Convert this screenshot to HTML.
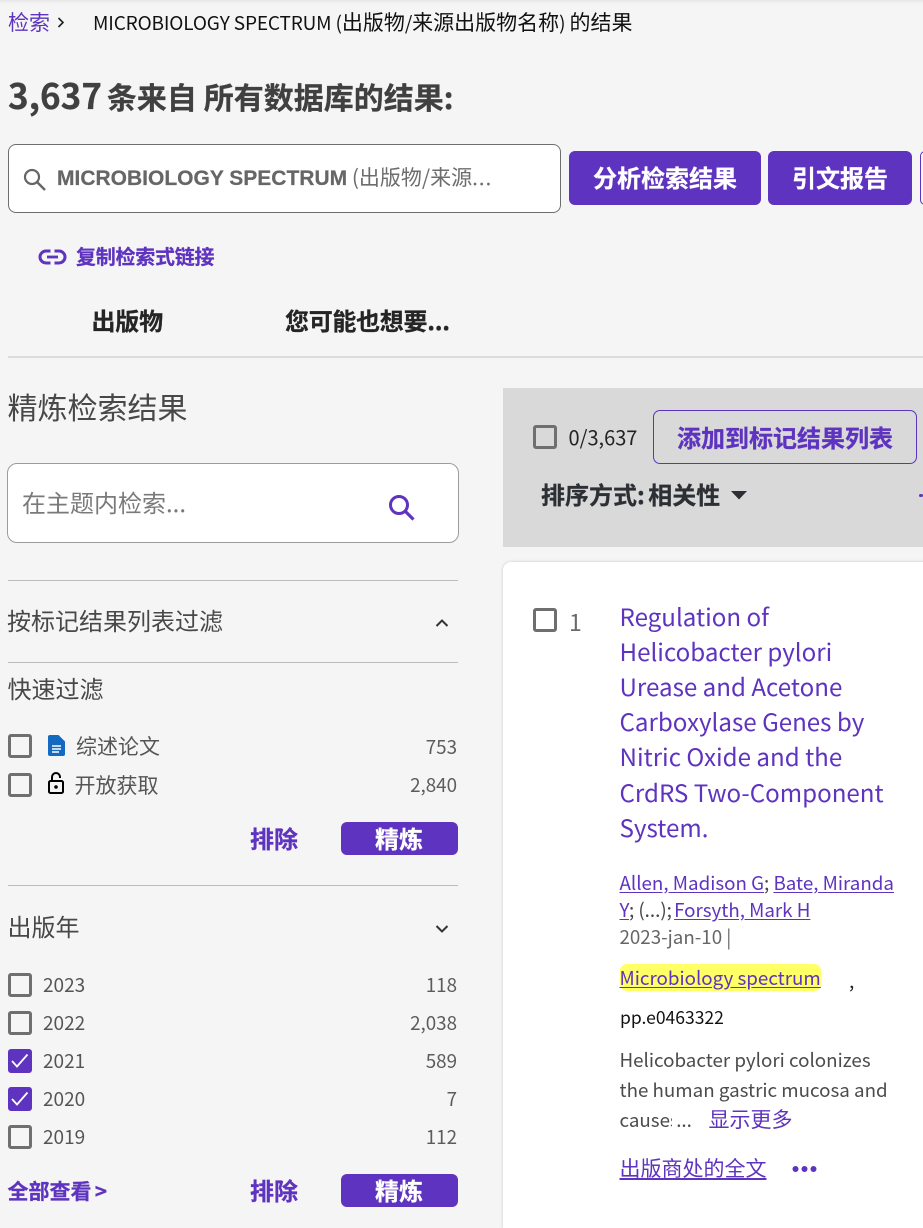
<!DOCTYPE html>
<html lang="zh">
<head>
<meta charset="utf-8">
<title>Results</title>
<style>
html{margin:0;padding:0;width:923px;height:1228px;overflow:hidden}
body{margin:0;padding:0;width:923px;height:1228px;overflow:hidden;position:relative;background:#f5f5f5;font-family:"Noto Sans CJK SC","Liberation Sans",sans-serif;color:#494d4e}
.t{position:absolute;white-space:nowrap;line-height:30px;height:30px}
.p{color:#5e33bf}
.b{font-weight:700;-webkit-text-stroke:.25px currentColor}
.u{text-decoration:underline;text-underline-offset:2px}
.r{position:absolute;right:466px;white-space:nowrap;line-height:30px;height:30px;font-size:18.800px;color:#5c5c5c}
.cb{position:absolute;left:8px;width:18px;height:18px;border:3px solid #6f6f6f;border-radius:3px}
.cb.on{background:#5e33bf;border-color:#5e33bf}
.cb svg{position:absolute;left:-1px;top:-1px}
.ln{position:absolute;height:1px;background:#bcbcbc;left:8px;width:450px}
.btn{position:absolute;background:#5e33bf;color:#fff;font-weight:700;text-align:center;border-radius:6px;-webkit-text-stroke:.25px #fff}
svg{position:absolute;overflow:visible}
</style>
</head>
<body>
<div style="position:absolute;left:0;top:0;width:923px;height:4px;background:linear-gradient(#e6e6e6,#f5f5f5)"></div>

<div class="t p" style="left:8px;top:7px;font-size:21px">检索</div>
<svg style="left:57px;top:17px" width="8" height="11" viewBox="0 0 8 11"><path d="M1.500 1l4.500 4.500L1.500 10" fill="none" stroke="#222" stroke-width="1.600"/></svg>
<div class="t" style="left:93px;top:7px;font-size:19px;color:#111;letter-spacing:-.15px">MICROBIOLOGY SPECTRUM (<span style="font-size:21px;letter-spacing:0">出版物</span>/<span style="font-size:21px;letter-spacing:0">来源出版物名称</span>) <span style="font-size:21px;letter-spacing:0">的结果</span></div>

<div class="t b" style="left:8px;top:77px;font-size:35px;line-height:36px;height:36px;color:#404040">3,637 <span style="font-size:30px;margin-left:-3px">条来自 所有数据库的结果:</span></div>

<div style="position:absolute;left:8px;top:144px;width:553px;height:69px;box-sizing:border-box;background:#fff;border:1px solid #6d6d6d;border-radius:8px"></div>
<svg style="left:22px;top:167px" width="25" height="25" viewBox="0 0 25 25"><circle cx="10" cy="10" r="7" fill="none" stroke="#666" stroke-width="2.200"/><path d="M15 15l8 8" stroke="#666" stroke-width="2.400" fill="none"/></svg>
<div class="t" style="left:57px;top:162px;font-size:21px;color:#6d6d6d"><span style="font-family:'Liberation Sans',sans-serif;font-weight:700;color:#666;-webkit-text-stroke:.2px #666">MICROBIOLOGY SPECTRUM</span> (出版物/来源<span style="letter-spacing:.8px">...</span></div>

<div class="btn" style="left:569px;top:151px;width:192px;height:54px;line-height:51px;font-size:24px">分析检索结果</div>
<div class="btn" style="left:768px;top:151px;width:144px;height:54px;line-height:51px;font-size:24px">引文报告</div>
<div style="position:absolute;left:920px;top:151px;width:10px;height:54px;box-sizing:border-box;border:1px solid #5e33bf;border-radius:6px"></div>

<svg style="left:38px;top:247px" width="29" height="20" viewBox="0 0 29 20"><rect x="2" y="4" width="25" height="12" rx="6" fill="none" stroke="#5e33bf" stroke-width="3"/><rect x="9" y="8.600" width="11" height="2.800" fill="#5e33bf"/><rect x="12.500" y="2" width="4" height="4.500" fill="#f5f5f5"/><rect x="12.500" y="13.500" width="4" height="4.500" fill="#f5f5f5"/></svg>
<div class="t p b" style="left:76px;top:241px;font-size:20px;letter-spacing:-.25px">复制检索式链接</div>

<div class="t b" style="left:91.500px;top:305px;font-size:24px;color:#252525;letter-spacing:-.2px">出版物</div>
<div class="t b" style="left:285px;top:305px;font-size:24px;color:#252525;letter-spacing:-.3px">您可能也想要...</div>
<div style="position:absolute;left:8px;top:356px;width:915px;height:2px;background:#dcdcdc"></div>

<div class="t" style="left:7.500px;top:391px;font-size:30px;color:#484848">精炼检索结果</div>

<div style="position:absolute;left:7px;top:463px;width:452px;height:80px;box-sizing:border-box;background:#fff;border:1.500px solid #9c9c9c;border-radius:10px"></div>
<div class="t" style="left:22px;top:487px;font-size:24px;color:#7a7a7a">在主题内检索...</div>
<svg style="left:388px;top:494px" width="27" height="27" viewBox="0 0 27 27"><circle cx="11" cy="11" r="8.500" fill="none" stroke="#5e33bf" stroke-width="3"/><path d="M17.500 17.500l8 8" stroke="#5e33bf" stroke-width="3.200" fill="none"/></svg>

<div class="ln" style="top:580px"></div>
<div class="t" style="left:7px;top:605px;font-size:24px;color:#484848">按标记结果列表过滤</div>
<svg style="left:435px;top:618px" width="14" height="10" viewBox="0 0 14 10"><path d="M1.500 8L7 2.500 12.500 8" fill="none" stroke="#333" stroke-width="2"/></svg>
<div class="ln" style="top:662px"></div>
<div class="t" style="left:7.500px;top:673px;font-size:24px;color:#484848">快速过滤</div>

<div class="cb" style="top:734px"></div>
<svg style="left:48px;top:735px" width="17" height="21" viewBox="0 0 17 21"><path d="M2 0h8.500L17 6.500V19a2 2 0 0 1-2 2H2a2 2 0 0 1-2-2V2a2 2 0 0 1 2-2z" fill="#1469c0"/><path d="M4 11h9M4 14h9M4 17h7" stroke="#fff" stroke-width="1.500"/></svg>
<div class="t" style="left:76px;top:731px;font-size:21px;color:#555">综述论文</div>
<div class="r" style="top:732px">753</div>

<div class="cb" style="top:773px"></div>
<svg style="left:48px;top:772px" width="17" height="22" viewBox="0 0 17 22"><rect x="1" y="9" width="14" height="12" rx="1.500" fill="none" stroke="#000" stroke-width="2"/><path d="M4 9V5a4 4 0 0 1 8 0v1" fill="none" stroke="#000" stroke-width="2"/><circle cx="8" cy="15" r="1.800" fill="#000"/></svg>
<div class="t" style="left:74.500px;top:770px;font-size:21px;color:#555">开放获取</div>
<div class="r" style="top:770px">2,840</div>

<div class="t p b" style="left:250px;top:823px;font-size:24px">排除</div>
<div class="btn" style="left:341px;top:822px;width:117px;height:33px;line-height:31px;font-size:24px;padding-right:1px;box-sizing:border-box">精炼</div>

<div class="ln" style="top:885px"></div>
<div class="t" style="left:7.500px;top:911px;font-size:24px;color:#484848">出版年</div>
<svg style="left:435px;top:924px" width="14" height="10" viewBox="0 0 14 10"><path d="M1.500 2L7 7.500 12.500 2" fill="none" stroke="#333" stroke-width="2"/></svg>

<div class="cb" style="top:973px"></div>
<div class="t" style="left:43px;top:970px;font-size:19px;color:#555">2023</div>
<div class="r" style="top:970px">118</div>
<div class="cb" style="top:1011px"></div>
<div class="t" style="left:43px;top:1008px;font-size:19px;color:#555">2022</div>
<div class="r" style="top:1008px">2,038</div>
<div class="cb on" style="top:1049px"><svg width="20" height="20" viewBox="0 0 20 20"><path d="M2 10l5 5.500L17.500 3.500" fill="none" stroke="#fff" stroke-width="1.800"/></svg></div>
<div class="t" style="left:43px;top:1046px;font-size:19px;color:#555">2021</div>
<div class="r" style="top:1046px">589</div>
<div class="cb on" style="top:1087px"><svg width="20" height="20" viewBox="0 0 20 20"><path d="M2 10l5 5.500L17.500 3.500" fill="none" stroke="#fff" stroke-width="1.800"/></svg></div>
<div class="t" style="left:43px;top:1084px;font-size:19px;color:#555">2020</div>
<div class="r" style="top:1084px">7</div>
<div class="cb" style="top:1125px"></div>
<div class="t" style="left:43px;top:1122px;font-size:19px;color:#555">2019</div>
<div class="r" style="top:1122px">112</div>

<div class="t p b" style="left:7.500px;top:1176px;font-size:21px;word-spacing:-1.500px">全部查看 &gt;</div>
<div class="t p b" style="left:250px;top:1175px;font-size:24px">排除</div>
<div class="btn" style="left:341px;top:1174px;width:117px;height:33px;line-height:31px;font-size:24px;padding-right:1px;box-sizing:border-box">精炼</div>

<div style="position:absolute;left:503px;top:388px;width:420px;height:159px;background:#d9d9d9"></div>
<div class="cb" style="left:533px;top:425px"></div>
<div class="t" style="left:568.500px;top:422px;font-size:20px;color:#222">0/3,637</div>
<div style="position:absolute;left:653px;top:410px;width:264px;height:54px;box-sizing:border-box;border:1px solid #5e33bf;border-radius:7px;text-align:center;line-height:51px;font-size:24px;font-weight:700;color:#5e33bf;-webkit-text-stroke:.25px #5e33bf">添加到标记结果列表</div>
<div class="t b" style="left:541px;top:479px;font-size:24px;color:#2c2f33;word-spacing:-2px">排序方式: 相关性</div>
<svg style="left:731px;top:491px" width="16" height="9" viewBox="0 0 16 9"><path d="M0 0h16L8 8.500z" fill="#2c2f33"/></svg>
<div style="position:absolute;left:919px;top:494px;width:4px;height:3px;background:#5e33bf;border-radius:2px"></div>

<div style="position:absolute;left:503px;top:562px;width:430px;height:666px;background:#fff;border-radius:8px 8px 0 0;box-shadow:0 0 3px rgba(0,0,0,.18)"></div>
<div class="cb" style="left:533px;top:608px"></div>
<div class="t" style="left:569px;top:606px;font-size:23px;color:#6a6a6a">1</div>
<div class="p" style="position:absolute;left:619.500px;top:597.800px;font-size:24.150px;line-height:35.170px;white-space:nowrap">Regulation of<br>Helicobacter pylori<br>Urease and Acetone<br>Carboxylase Genes by<br>Nitric Oxide and the<br>CrdRS Two-Component<br>System.</div>

<div class="t" style="left:619.500px;top:868px;font-size:18.750px;color:#444"><span class="p u">Allen, Madison G</span>; <span class="p u">Bate, Miranda</span></div>
<div class="t" style="left:619.500px;top:895px;font-size:18.750px;color:#444"><span class="p u">Y</span>; (...);<span style="margin-left:-2px"> </span><span class="p u">Forsyth, Mark H</span></div>
<div class="t" style="left:619.500px;top:922px;font-size:18.750px;color:#666">2023-jan-10 |</div>
<div style="position:absolute;left:620px;top:964px;width:201px;height:27px;background:#ffff66;border-radius:7px"></div>
<div class="t p u" style="left:619.500px;top:963px;font-size:18.750px">Microbiology spectrum</div>
<div class="t" style="left:849px;top:966px;font-size:19px;color:#222">,</div>
<div class="t" style="left:620px;top:1003px;font-size:17.500px;color:#111">pp.e0463322</div>
<div class="t" style="left:619.500px;top:1045px;font-size:18.750px;color:#4c4c4c">Helicobacter pylori colonizes</div>
<div class="t" style="left:619.500px;top:1075px;font-size:18.750px;color:#4c4c4c">the human gastric mucosa and</div>
<div class="t" style="left:619.500px;top:1105px;font-size:18.750px;color:#4c4c4c"><span style="display:inline-block;width:52.500px;overflow:hidden;vertical-align:top">causes</span> ...</div>
<div class="t p" style="left:708.500px;top:1104px;font-size:21px">显示更多</div>
<div class="t p u" style="left:619.500px;top:1153px;font-size:21px">出版商处的全文</div>
<svg style="left:792px;top:1165px" width="25" height="8" viewBox="0 0 25 8"><circle cx="3.500" cy="4" r="3" fill="#5e33bf"/><circle cx="12.500" cy="4" r="3" fill="#5e33bf"/><circle cx="21.500" cy="4" r="3" fill="#5e33bf"/></svg>
</body>
</html>
